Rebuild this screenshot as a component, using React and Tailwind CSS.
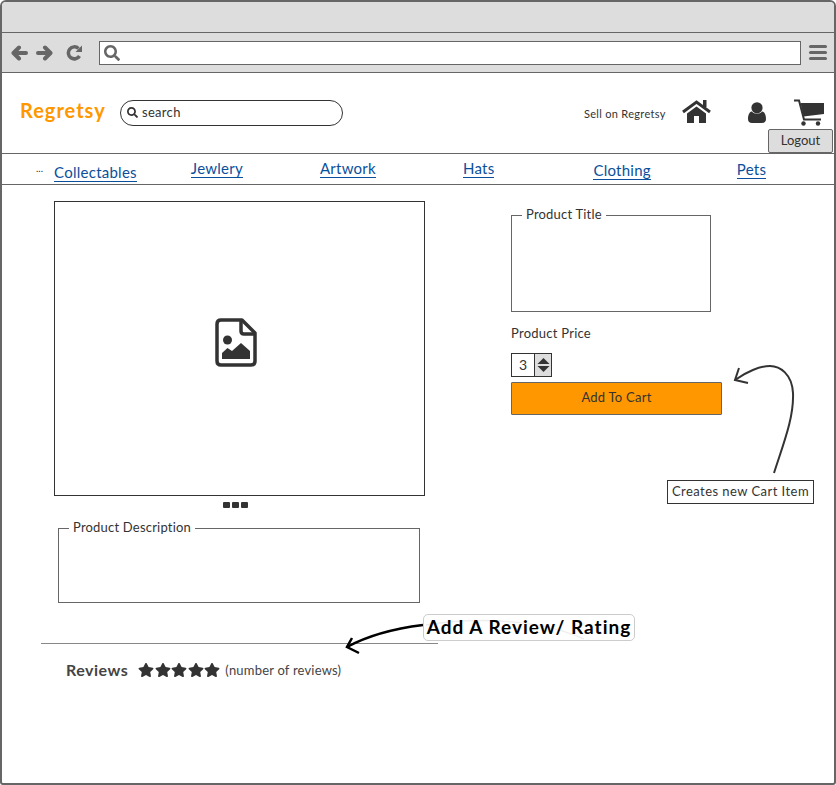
import { FaSearch, FaStar } from 'react-icons/fa'

function Box({ label, className }) {
    return (
        <fieldset className={`border border-[#666] ${className}`}>
            <legend className="relative -top-px ml-[10px] px-[4px] text-[13px] leading-[14px] tracking-[0.2px] text-[#333]">{label}</legend>
        </fieldset>
    )
}

function NavLink({ children, className }) {
    return <a className={`text-[15px] leading-[17px] tracking-[0.25px] text-[#0b4f9c] border-b-[1.5px] border-[#0b4f9c] ${className}`}>{children}</a>
}

function FileImageIcon() {
    return (
        <svg width="42" height="49" viewBox="0 0 42 49" fill="none" stroke="#333" strokeWidth="3.5" strokeLinejoin="round">
            <path d="M6 2H27L40 15V43C40 45.500 38.500 47 36 47H6C3.500 47 2 45.500 2 43V6C2 3.500 3.500 2 6 2Z" />
            <path d="M26 3V13C26 15 27 16 29 16H39" />
            <circle cx="12.500" cy="22" r="4.500" fill="#333" stroke="none" />
            <path d="M7 41V35L12.500 30L17 33L26 25L35 33V41Z" fill="#333" stroke="none" />
        </svg>
    )
}

function HomeIcon() {
    return (
        <svg width="29" height="23" viewBox="0 0 29 23" fill="#333">
            <path d="M21 0H24.500V7H21Z" />
            <path d="M1 12L14.500 2L28 12" fill="none" stroke="#333" strokeWidth="3" />
            <path d="M5 13.500L14.500 6.500L24 13.500V23H17V16H12V23H5Z" />
        </svg>
    )
}

function UserIcon() {
    return (
        <svg width="18" height="21" viewBox="0 0 18 21" fill="#333">
            <circle cx="9" cy="5.800" r="5.600" />
            <path d="M0 17C0 12 2 9.500 4 9.500C6 12.500 12 12.500 14 9.500C16 9.500 18 12 18 17C18 19.500 16.500 21 14 21H4C1.500 21 0 19.500 0 17Z" />
        </svg>
    )
}

function CartIcon() {
    return (
        <svg width="31" height="27" viewBox="0 0 31 27" fill="#333">
            <path d="M1 1.500H6L11 20.500H28" fill="none" stroke="#333" strokeWidth="2" />
            <path d="M7.500 4H31V15L10.500 17.500Z" />
            <circle cx="10.500" cy="24.500" r="2.200" />
            <circle cx="25" cy="24.500" r="2.200" />
        </svg>
    )
}

export default function App() {
    return (
        <div className="relative w-[836px] h-[785px] overflow-hidden bg-white border-2 border-[#666] rounded-t-[6px] rounded-b-[3px] font-['Lato','Noto_Sans',sans-serif] text-[#333]">
            <div className="h-[30px] bg-[#ddd] border-b border-[#666] box-content" />
            <div className="h-[39px] bg-[#ddd] border-b border-[#666] box-content flex items-center text-[#666]">
                <svg className="ml-[9px]" width="17" height="16" viewBox="0 0 17 16" fill="none" stroke="#666" strokeWidth="4" strokeLinecap="round" strokeLinejoin="round">
                    <path d="M15 8H3M8 2.500 2.500 8 8 13.500" />
                </svg>
                <svg className="ml-[8px]" width="17" height="16" viewBox="0 0 17 16" fill="none" stroke="#666" strokeWidth="4" strokeLinecap="round" strokeLinejoin="round">
                    <path d="M2 8H14M9 2.500 14.500 8 9 13.500" />
                </svg>
                <svg className="ml-[13px]" width="17" height="16" viewBox="0 0 17 16" fill="none" stroke="#666" strokeWidth="3.500">
                    <path d="M13.500 11A6 6 0 1 1 12.500 3.500" />
                    <path d="M9.500 7H16V0.500Z" fill="#666" stroke="none" />
                </svg>
                <div className="ml-[16px] w-[702px] h-[24px] bg-white border border-[#666] flex items-center pl-[4px]">
                    <FaSearch className="text-[16px]" />
                </div>
                <div className="ml-[8px] w-[18px] flex flex-col gap-[2.500px]">
                    <div className="h-[3.500px] rounded-[2px] bg-[#666]" />
                    <div className="h-[3.500px] rounded-[2px] bg-[#666]" />
                    <div className="h-[3.500px] rounded-[2px] bg-[#666]" />
                </div>
            </div>

            <div className="h-[80px] flex items-center">
                <div className="ml-[18px] w-[100px] text-[20px] leading-[24px] font-bold tracking-[1px] text-[#ff9800] -mt-[7px]">Regretsy</div>
                <div className="w-[223px] h-[26px] border border-[#333] rounded-[13px] flex items-center pl-[6px] -mt-[1px]">
                    <FaSearch className="text-[11px] text-[#333]" />
                    <span className="ml-[4px] text-[13px] tracking-[0.3px] text-[#333]">search</span>
                </div>
                <span className="ml-[241px] w-[98px] mt-[2px] text-[11px] tracking-[0.3px] text-[#333] whitespace-nowrap">Sell on Regretsy</span>
                <div className="-mt-[4px]"><HomeIcon /></div>
                <div className="ml-[37px] -mt-[2px]"><UserIcon /></div>
                <div className="ml-[27px] -mt-[1px]"><CartIcon /></div>
            </div>

            <div className="h-[30px] border-y border-[#666] box-content flex items-start text-nowrap">
                <span className="ml-[34px] mt-[8px] text-[10px] leading-[12px]">...</span>
                <NavLink className="ml-[11px] mt-[10px]">Collectables</NavLink>
                <NavLink className="ml-[54px] mt-[6px]">Jewlery</NavLink>
                <NavLink className="ml-[77px] mt-[6px]">Artwork</NavLink>
                <NavLink className="ml-[87px] mt-[6px]">Hats</NavLink>
                <NavLink className="ml-[99px] mt-[8px]">Clothing</NavLink>
                <NavLink className="ml-[86px] mt-[7px]">Pets</NavLink>
            </div>

            <div className="flex items-start">
                <div className="ml-[39px] w-[397px] pt-[16px]">
                    <div className="ml-[13px] w-[371px] h-[295px] border border-[#333] flex items-center justify-center">
                        <div className="-mt-[13px] -ml-[7px]"><FileImageIcon /></div>
                    </div>
                    <div className="mt-[6px] ml-[182px] flex gap-[2px]">
                        <div className="w-[7px] h-[6px] rounded-[1px] bg-[#333]" />
                        <div className="w-[7px] h-[6px] rounded-[1px] bg-[#333]" />
                        <div className="w-[7px] h-[6px] rounded-[1px] bg-[#333]" />
                    </div>
                    <Box label="Product Description" className="mt-[13px] ml-[17px] w-[362px] h-[82px]" />
                    <div className="mt-[40px] h-px w-[397px] bg-[#888]" />
                    <div className="mt-[14px] ml-[25px] flex items-center">
                        <span className="text-[16px] font-bold tracking-[0.5px] text-[#444]">Reviews</span>
                        <div className="ml-[10px] flex gap-[0.5px] text-[16px] text-[#333]">
                            <FaStar />
                            <FaStar />
                            <FaStar />
                            <FaStar />
                            <FaStar />
                        </div>
                        <span className="ml-[5px] mt-[1px] text-[13px] tracking-[0.2px] text-[#444]">(number of reviews)</span>
                    </div>
                </div>

                <div className="ml-[73px] pt-[23px] w-[211px]">
                    <Box label="Product Title" className="w-[200px] h-[104px]" />
                    <div className="mt-[13px] text-[13px] leading-[16px] tracking-[0.25px]">Product Price</div>
                    <div className="mt-[12px] flex w-[41px] h-[24px] border border-[#333]">
                        <div className="w-[23px] pb-[2px] flex items-center justify-center text-[14px] border-r border-[#333]">3</div>
                        <div className="flex-1 bg-[#ddd] flex items-center justify-center">
                            <svg width="13" height="16" viewBox="0 0 13 16" fill="#333">
                                <path d="M6.500 1 12.500 7H.5z" />
                                <path d="M6.500 15 12.500 9H.5z" />
                            </svg>
                        </div>
                    </div>
                    <div className="mt-[5px] h-[33px] pb-[2px] bg-[#ff9800] border border-[#666] rounded-[1px] flex items-center justify-center text-[13px] tracking-[0.25px]">Add To Cart</div>
                </div>
            </div>

            <div className="absolute left-[766px] top-[127px] w-[65px] h-[24px] bg-[#ddd] border border-[#666] rounded-[2px] flex items-center justify-center text-[13px]">Logout</div>

            <svg className="absolute left-[730px] top-[360px]" width="70" height="115" viewBox="0 0 70 115" fill="none" stroke="#333" strokeWidth="2">
                <path d="M42 111C52 80 62 55 61 31C60 12 48 4 38 4C28 4 14 10 3 18" />
                <path d="M7 6 3 18 16 21" />
            </svg>
            <div className="absolute left-[665px] top-[478px] w-[147px] h-[24px] bg-white border border-[#333] flex items-center justify-center text-[13px] tracking-[0.45px] whitespace-nowrap">Creates new Cart Item</div>

            <svg className="absolute left-[342px] top-[618px]" width="84" height="36" viewBox="0 0 84 36" fill="none" stroke="#000" strokeWidth="2.500">
                <path d="M79 5C55 8 25 15 3 27" />
                <path d="M8 18 3 27 15 33" />
            </svg>
            <div className="absolute left-[421px] top-[612px] w-[212px] h-[27px] bg-white border border-[#ccc] rounded-[5px] flex items-center justify-center text-[19px] font-bold tracking-[1px] text-black whitespace-nowrap">
                <svg className="absolute left-0 top-0" width="212" height="27" viewBox="0 0 212 27" fill="none" stroke="#eee" strokeWidth="1.500">
                    <path d="M2 10C60 1 120 6 160 24" />
                </svg>
                <span className="relative">Add A Review/ Rating</span>
            </div>
        </div>
    )
}
